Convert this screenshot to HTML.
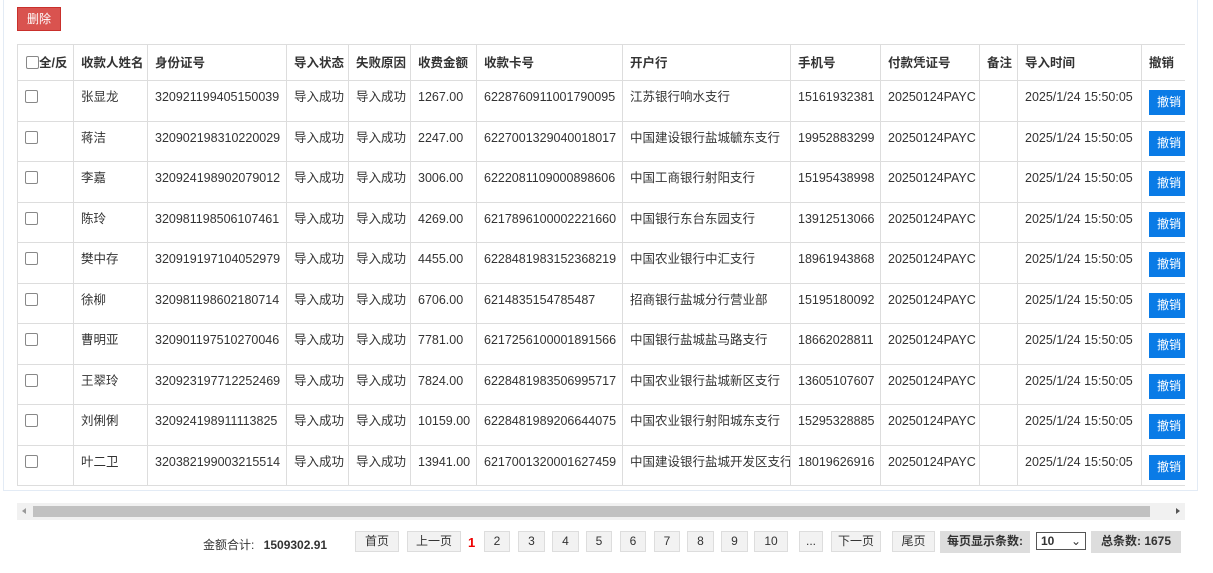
<!DOCTYPE html>
<html><head><meta charset="utf-8"><style>
body{margin:0;background:#fff;font-family:"Liberation Sans","Noto Sans CJK SC",sans-serif;font-size:12.5px;color:#333;width:1213px;height:573px;overflow:hidden;position:relative}
.panel{position:absolute;left:3px;top:-2px;width:1195px;height:493px;border:1px solid #e3ebf5;box-sizing:border-box}
.del{position:absolute;left:17px;top:7px;width:44px;height:24px;background:#d9534f;border:1px solid #c9302c;box-sizing:border-box;color:#fff;font-size:12px;line-height:22px;text-align:center}
.wrap{position:absolute;left:17px;top:44px;width:1168px;height:443px;overflow:hidden}
table{border-collapse:collapse;table-layout:fixed;width:1220px}
td,th{border:1px solid #ddd;padding:0 0 0 7px;text-align:left;white-space:nowrap;overflow:hidden;box-sizing:border-box;line-height:16px}
tr.h{height:36px}
tr.r{height:40.5px}
th{font-weight:bold;vertical-align:middle;padding-top:1px}
tr.r td{vertical-align:top;padding-top:8px}
.cb{display:inline-block;width:11px;height:11px;border:1px solid #888;border-radius:2px;vertical-align:-2px}
.bt{display:inline-block;background:#0a7be6;color:#fff;width:40px;height:25px;line-height:25px;text-align:center;font-size:12px;margin-top:1px}
.sb{position:absolute;left:17px;top:503px;width:1168px;height:17px;background:#f1f1f1}
.th{position:absolute;left:16px;top:3px;width:1117px;height:11px;background:#c1c1c1}
.pg{position:absolute;top:531px;height:21px;border:1px solid #ddd;background:#f2f2f2;box-sizing:border-box;font-size:12px;line-height:19px;text-align:center;color:#333}
.g{background:#ddd;border-color:#ddd;font-weight:bold}
</style></head><body>
<div class="panel"></div>
<div class="del">删除</div>
<div class="wrap"><table>
<colgroup><col style="width:56px"><col style="width:74px"><col style="width:139px"><col style="width:62px"><col style="width:62px"><col style="width:66px"><col style="width:146px"><col style="width:168px"><col style="width:90px"><col style="width:99px"><col style="width:38px"><col style="width:124px"><col style="width:96px"></colgroup>
<tr class="h"><th style="padding-left:8px"><span class="cb"></span>全/反</th><th>收款人姓名</th><th>身份证号</th><th>导入状态</th><th>失败原因</th><th>收费金额</th><th>收款卡号</th><th>开户行</th><th>手机号</th><th>付款凭证号</th><th>备注</th><th>导入时间</th><th>撤销</th></tr>
<tr class="r"><td><span class="cb"></span></td><td>张显龙</td><td>320921199405150039</td><td>导入成功</td><td>导入成功</td><td>1267.00</td><td>6228760911001790095</td><td>江苏银行响水支行</td><td>15161932381</td><td>20250124PAYC</td><td></td><td>2025/1/24 15:50:05</td><td><span class="bt">撤销</span></td></tr>
<tr class="r"><td><span class="cb"></span></td><td>蒋洁</td><td>320902198310220029</td><td>导入成功</td><td>导入成功</td><td>2247.00</td><td>6227001329040018017</td><td>中国建设银行盐城毓东支行</td><td>19952883299</td><td>20250124PAYC</td><td></td><td>2025/1/24 15:50:05</td><td><span class="bt">撤销</span></td></tr>
<tr class="r"><td><span class="cb"></span></td><td>李嘉</td><td>320924198902079012</td><td>导入成功</td><td>导入成功</td><td>3006.00</td><td>6222081109000898606</td><td>中国工商银行射阳支行</td><td>15195438998</td><td>20250124PAYC</td><td></td><td>2025/1/24 15:50:05</td><td><span class="bt">撤销</span></td></tr>
<tr class="r"><td><span class="cb"></span></td><td>陈玲</td><td>320981198506107461</td><td>导入成功</td><td>导入成功</td><td>4269.00</td><td>6217896100002221660</td><td>中国银行东台东园支行</td><td>13912513066</td><td>20250124PAYC</td><td></td><td>2025/1/24 15:50:05</td><td><span class="bt">撤销</span></td></tr>
<tr class="r"><td><span class="cb"></span></td><td>樊中存</td><td>320919197104052979</td><td>导入成功</td><td>导入成功</td><td>4455.00</td><td>6228481983152368219</td><td>中国农业银行中汇支行</td><td>18961943868</td><td>20250124PAYC</td><td></td><td>2025/1/24 15:50:05</td><td><span class="bt">撤销</span></td></tr>
<tr class="r"><td><span class="cb"></span></td><td>徐柳</td><td>320981198602180714</td><td>导入成功</td><td>导入成功</td><td>6706.00</td><td>6214835154785487</td><td>招商银行盐城分行营业部</td><td>15195180092</td><td>20250124PAYC</td><td></td><td>2025/1/24 15:50:05</td><td><span class="bt">撤销</span></td></tr>
<tr class="r"><td><span class="cb"></span></td><td>曹明亚</td><td>320901197510270046</td><td>导入成功</td><td>导入成功</td><td>7781.00</td><td>6217256100001891566</td><td>中国银行盐城盐马路支行</td><td>18662028811</td><td>20250124PAYC</td><td></td><td>2025/1/24 15:50:05</td><td><span class="bt">撤销</span></td></tr>
<tr class="r"><td><span class="cb"></span></td><td>王翠玲</td><td>320923197712252469</td><td>导入成功</td><td>导入成功</td><td>7824.00</td><td>6228481983506995717</td><td>中国农业银行盐城新区支行</td><td>13605107607</td><td>20250124PAYC</td><td></td><td>2025/1/24 15:50:05</td><td><span class="bt">撤销</span></td></tr>
<tr class="r"><td><span class="cb"></span></td><td>刘俐俐</td><td>320924198911113825</td><td>导入成功</td><td>导入成功</td><td>10159.00</td><td>6228481989206644075</td><td>中国农业银行射阳城东支行</td><td>15295328885</td><td>20250124PAYC</td><td></td><td>2025/1/24 15:50:05</td><td><span class="bt">撤销</span></td></tr>
<tr class="r"><td><span class="cb"></span></td><td>叶二卫</td><td>320382199003215514</td><td>导入成功</td><td>导入成功</td><td>13941.00</td><td>6217001320001627459</td><td>中国建设银行盐城开发区支行</td><td>18019626916</td><td>20250124PAYC</td><td></td><td>2025/1/24 15:50:05</td><td><span class="bt">撤销</span></td></tr>
</table></div>
<div class="sb"><div style="position:absolute;left:5px;top:5px;border:3px solid transparent;border-right:4px solid #999;border-left:0"></div><div class="th"></div><div style="position:absolute;right:5px;top:5px;border:3px solid transparent;border-left:4px solid #555;border-right:0"></div></div>
<div style="position:absolute;left:203px;top:536px;font-size:12px">金额合计: <b style="margin-left:6px">1509302.91</b></div>
<div class="pg" style="left:355px;width:44px">首页</div>
<div class="pg" style="left:407px;width:54px">上一页</div>
<div style="position:absolute;left:468px;top:535px;color:#e00;font-weight:bold;font-size:13px">1</div>
<div class="pg" style="left:484px;width:26px">2</div>
<div class="pg" style="left:518px;width:27px">3</div>
<div class="pg" style="left:552px;width:27px">4</div>
<div class="pg" style="left:586px;width:26px">5</div>
<div class="pg" style="left:620px;width:26px">6</div>
<div class="pg" style="left:654px;width:26px">7</div>
<div class="pg" style="left:687px;width:27px">8</div>
<div class="pg" style="left:721px;width:27px">9</div>
<div class="pg" style="left:754px;width:34px">10</div>
<div class="pg" style="left:799px;width:24px">...</div>
<div class="pg" style="left:831px;width:50px">下一页</div>
<div class="pg" style="left:892px;width:43px">尾页</div>
<div class="pg g" style="left:940px;width:90px;height:22px">每页显示条数:</div>
<div style="position:absolute;left:1036px;top:532px;width:50px;height:18px;border:1px solid #555;box-sizing:border-box;font-size:12px;font-weight:bold;line-height:16px;padding-left:4px">10<span style="position:absolute;right:4px;font-weight:normal">⌄</span></div>
<div class="pg g" style="left:1091px;width:90px;height:22px">总条数: 1675</div>
</body></html>
